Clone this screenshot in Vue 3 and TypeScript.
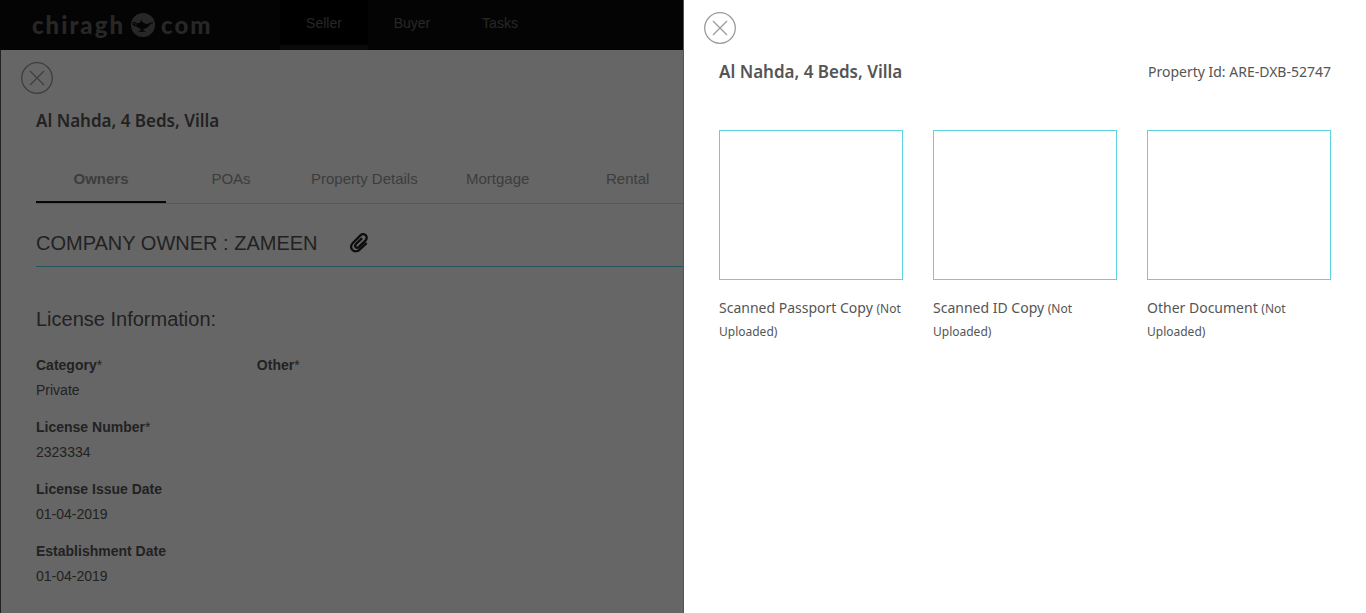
<script setup lang="ts">
import { ref } from 'vue'

interface Field {
  label: string
  value: string
  required?: boolean
}

const navItems: string[] = ['Seller', 'Buyer', 'Tasks']
const activeNav = ref<string>('Seller')

const tabs: string[] = ['Owners', 'POAs', 'Property Details', 'Mortgage', 'Rental']
const activeTab = ref<string>('Owners')

const rows: Field[][] = [
  [
    { label: 'Category', value: 'Private', required: true },
    { label: 'Other', value: '', required: true },
  ],
  [{ label: 'License Number', value: '2323334', required: true }],
  [{ label: 'License Issue Date', value: '01-04-2019' }],
  [{ label: 'Establishment Date', value: '01-04-2019' }],
]

const documents: string[] = ['Scanned Passport Copy', 'Scanned ID Copy', 'Other Document']
const drawerOpen = ref<boolean>(true)
</script>

<template>
  <div class="page">
    <header class="topbar">
      <a class="logo" href="#" aria-label="chiragh.com">
        <span>chiragh</span>
        <svg class="lamp" viewBox="0 0 24 24" aria-hidden="true">
          <circle cx="12" cy="12" r="12" fill="currentColor" />
          <path
            d="M5.2 10.4C3.6 8.8 1.6 9.6 1.8 10.8C2 12 3.8 11.8 4.2 10.8M2.4 11.6C3.4 12.8 5 13 6.6 13.2"
            fill="none"
            stroke="#0c0c0c"
            stroke-width="1.1"
          />
          <path
            d="M5 10.3L8.4 9.9L9.7 8.5L9.9 7.2L10.7 7.2L11.1 8.5L12.6 9.8L15.2 11.1C17.5 11.1 18.5 9.2 22.2 9.2L22.4 10C19.8 10.4 18.5 12.6 17 14C15.6 15.3 13.6 15.9 12.3 16.1L12.3 17L14.3 18.2L14.3 18.8L7.6 18.8L7.6 18.2L9.8 17L9.8 16.1C7.5 15.5 5.2 13.5 5 10.3Z"
            fill="#0c0c0c"
          />
        </svg>
        <span>com</span>
      </a>
      <nav class="nav">
        <a
          v-for="item in navItems"
          :key="item"
          href="#"
          class="nav-link"
          :class="{ active: item === activeNav }"
          @click.prevent="activeNav = item"
          >{{ item }}</a
        >
      </nav>
    </header>

    <main class="panel">
      <button type="button" class="close" aria-label="Close property">
        <svg viewBox="0 0 32 32" aria-hidden="true">
          <circle cx="16" cy="16" r="15.3" />
          <path d="M9 9L23 23M23 9L9 23" />
        </svg>
      </button>
      <div class="content">
        <h1 class="title">Al Nahda, 4 Beds, Villa</h1>

        <div class="tabs" role="tablist">
          <button
            v-for="tab in tabs"
            :key="tab"
            type="button"
            role="tab"
            class="tab"
            :class="{ active: tab === activeTab }"
            :aria-selected="tab === activeTab"
            @click="activeTab = tab"
          >
            {{ tab }}
          </button>
        </div>

        <div class="owner">
          <h2>COMPANY OWNER : ZAMEEN</h2>
          <button type="button" class="clip" aria-label="Documents" @click="drawerOpen = true">
            <svg viewBox="0 0 20 20" aria-hidden="true">
              <path
                d="M17 10.6L10.6 16.6C8.5 18.6 5.3 18.8 3.4 17C1.5 15.2 1.7 12.1 3.6 10.2L11.2 2.6C12.8 1 15.1 .9 16.6 2.2C18.2 3.7 18 6 16.4 7.6L9.9 13.9C8.9 14.8 7.5 14.9 6.7 14.1C5.9 13.3 6 12 7 11L12.4 5.8"
              />
            </svg>
          </button>
        </div>

        <h3 class="section">License Information:</h3>
        <dl v-for="(row, i) in rows" :key="i" class="row">
          <div v-for="field in row" :key="field.label">
            <dt>{{ field.label }}<span v-if="field.required">*</span></dt>
            <dd>{{ field.value }}</dd>
          </div>
        </dl>
      </div>
    </main>

    <div v-if="drawerOpen" class="backdrop">
      <aside class="drawer" role="dialog" aria-label="Documents">
        <button type="button" class="close" aria-label="Close documents" @click="drawerOpen = false">
          <svg viewBox="0 0 32 32" aria-hidden="true">
            <circle cx="16" cy="16" r="15.3" />
            <path d="M9 9L23 23M23 9L9 23" />
          </svg>
        </button>
        <div class="content">
          <div class="drawer-head">
            <h2 class="title">Al Nahda, 4 Beds, Villa</h2>
            <span class="property-id">Property Id: ARE-DXB-52747</span>
          </div>
          <div class="documents">
            <figure v-for="doc in documents" :key="doc">
              <div class="preview"></div>
              <figcaption>{{ doc }} <small>(Not Uploaded)</small></figcaption>
            </figure>
          </div>
        </div>
      </aside>
    </div>
  </div>
</template>

<style>
body {
  margin: 0;
  overflow: hidden;
}
</style>

<style scoped>
.page {
  min-height: 100vh;
  display: flex;
  flex-direction: column;
  background: #fff;
  color: #555;
  font: 14px/20px 'Liberation Sans', Arial, sans-serif;
}
h1,
h2,
h3,
dl,
dd,
figure {
  margin: 0;
}
button {
  border: 0;
  padding: 0;
  background: none;
  font: inherit;
  color: inherit;
  cursor: pointer;
}
a {
  text-decoration: none;
}
.topbar {
  display: flex;
  height: 50px;
  background: #0c0c0c;
}
.logo {
  box-sizing: border-box;
  width: 280px;
  padding-left: 32px;
  display: flex;
  align-items: center;
  gap: 6px;
  color: #636363;
  font: 900 24px/48px Lato, sans-serif;
  letter-spacing: 2px;
}
.lamp {
  width: 24px;
  height: 24px;
}
.nav {
  display: flex;
}
.nav-link {
  box-sizing: border-box;
  width: 88px;
  height: 50px;
  border-bottom: 5px solid #0c0c0c;
  text-align: center;
  line-height: 46px;
  color: #636363;
}
.nav-link.active {
  background: #000;
  border-bottom-color: #1a1a1a;
}
.panel {
  flex: 1;
  border-left: 1px solid #555;
  padding-top: 12px;
}
.close {
  display: block;
  margin-left: 20px;
  width: 32px;
  height: 32px;
}
.close svg {
  display: block;
  fill: none;
  stroke: #9b9b9b;
  stroke-width: 1.3;
}
.content {
  padding: 0 35px;
}
.title {
  font: 600 17px/24px 'Noto Sans', 'Open Sans', sans-serif;
  color: #555;
}
.panel .title {
  margin-top: 15px;
}
.tabs {
  display: flex;
  margin-top: 23px;
  border-bottom: 1px solid #ddd;
}
.tab {
  box-sizing: border-box;
  min-width: 130px;
  height: 47px;
  padding: 0 15px;
  border-bottom: 2px solid transparent;
  font-size: 15px;
  color: #999;
}
.tab.active {
  font-weight: 700;
  border-bottom-color: #111;
}
.owner {
  display: flex;
  align-items: center;
  gap: 31px;
  height: 47px;
  margin-top: 15px;
  border-bottom: 1px solid #5dd3e2;
}
.owner h2,
.section {
  font-size: 20px;
  line-height: 24px;
  font-weight: 400;
}
.clip svg {
  display: block;
  width: 20px;
  height: 20px;
  fill: none;
  stroke: #222;
  stroke-width: 2.3;
  stroke-linecap: round;
}
.section {
  margin: 40px 0 22px;
}
.row {
  display: grid;
  grid-template-columns: repeat(6, 1fr);
  column-gap: 30px;
  margin-bottom: 12px;
}
dt {
  font-weight: 700;
  line-height: 25px;
}
dt span {
  font-weight: 400;
}
dd {
  line-height: 25px;
}
.backdrop {
  position: fixed;
  inset: 0;
  display: flex;
  justify-content: flex-end;
  background: rgba(0, 0, 0, 0.6);
}
.drawer {
  box-sizing: border-box;
  width: 50%;
  padding-top: 12px;
  border-left: 1px solid #555;
  background: #fff;
  font: 14px/22px 'Noto Sans', 'Open Sans', sans-serif;
}
.drawer-head {
  display: flex;
  justify-content: space-between;
  align-items: center;
  margin: 16px 0 46px;
}
.documents {
  display: grid;
  grid-template-columns: repeat(3, 1fr);
  gap: 30px;
}
.preview {
  height: 148px;
  margin-bottom: 17px;
  border: 1px solid #5dd3e2;
}
small {
  font-size: 12px;
}
</style>
